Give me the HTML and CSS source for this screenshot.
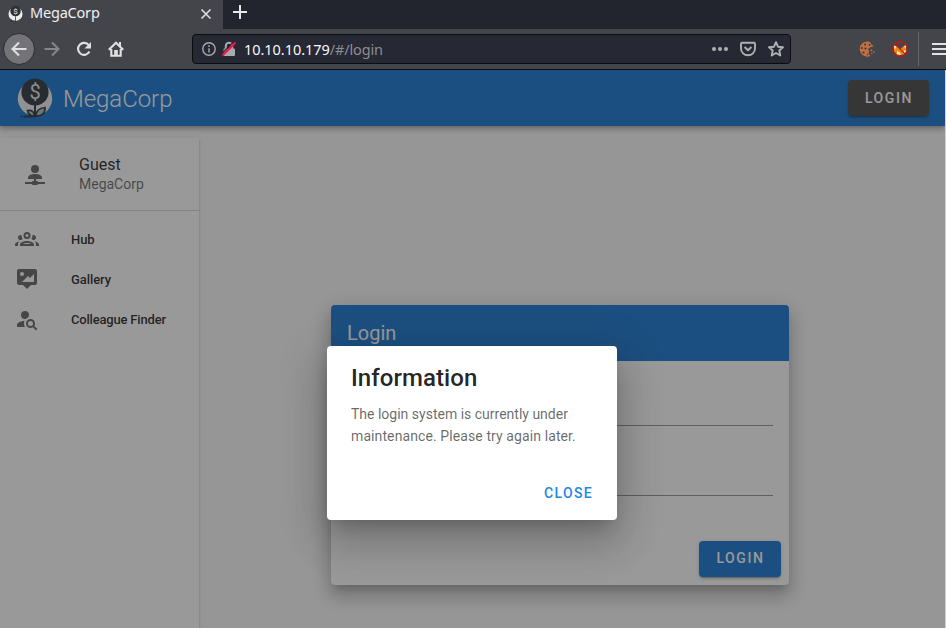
FILE: index.html
```
<!DOCTYPE html>
<html lang="en">
<head>
<meta charset="utf-8">
<title>MegaCorp</title>
<link rel="stylesheet" href="styles.css">
</head>
<body>
<div class="window">
  <div class="tabs">
    <div class="tab">
      <svg class="favicon" viewBox="4 2 38 42"><circle cx="23" cy="24" r="17.300" fill="#eee"/><circle cx="23" cy="17" r="13" fill="#2c3138"/><text x="23" y="24" class="coin">$</text><path d="M23 30v13M10 42h13" class="stem"/></svg>
      <span class="tab-title">MegaCorp</span>
      <svg class="tab-close" viewBox="0 0 12 12"><path d="m1.500 1.500 9 9m0-9-9 9"/></svg>
    </div>
    <svg class="new-tab" viewBox="0 0 14 14"><path d="M7 0v14M0 7h14"/></svg>
  </div>
  <div class="toolbar">
    <div class="back"><svg viewBox="0 0 16 16"><path d="M15.500 8H1.500M8 1.500 1.500 8 8 14.500"/></svg></div>
    <svg class="nav forward" viewBox="0 0 16 16"><path d="M.5 8h14M8 1.500 14.500 8 8 14.500"/></svg>
    <svg class="nav reload" viewBox="0 0 16 16"><path d="M13.400 10.600A6 6 0 1 1 12.800 4.200"/><path d="M15 1v6.500H8.500Z" class="solid"/></svg>
    <svg class="nav home" viewBox="0 0 16 16"><path d="M.8 8.800 8 1.800l7.200 7M3.300 8v6.700h9.400V8"/><path d="M6.200 9h3.600v6H6.200ZM11 1h2v4h-2Z" class="solid"/></svg>
    <div class="url">
      <svg class="info" viewBox="0 0 14 14"><circle cx="7" cy="7" r="6.200"/><path d="M7 6.200v4.300M7 3.300v1.600"/></svg>
      <svg class="lock" viewBox="0 0 14 16"><path d="M3.800 8V5a3.200 3.200 0 0 1 6.400 0v3" class="shackle"/><rect x="1.500" y="7.500" width="11.500" height="7.500" rx="1"/><path d="M-.8 13.200 12.200.2" class="gap"/><path d="M.5 14.500 13.500 1.500" class="slash"/></svg>
      <span class="address"><b>10.10.10.179</b>/#/login</span>
      <svg class="dots" viewBox="0 0 16 4"><circle cx="2" cy="2" r="2"/><circle cx="8" cy="2" r="2"/><circle cx="14" cy="2" r="2"/></svg>
      <svg class="line pocket" viewBox="0 0 16 16"><path d="M2 1.800h12q1 0 1 1V7.500a7 6.800 0 0 1-14 0V2.800q0-1 1-1ZM4.600 6 8 9.300 11.400 6"/></svg>
      <svg class="line star" viewBox="0 0 16 16"><path d="m8 1.200 2 4.500 5 .5-3.700 3.300 1 5L8 12l-4.300 2.500 1-5L1 6.200l5-.5Z"/></svg>
    </div>
    <svg class="ext cookie" viewBox="0 0 16 16"><path d="M10.500.8A7.600 7.600 0 1 0 11.500 15L9.500 12.500 10 10 9 8l2-1.500 4-1.500-2-1Z" fill="#bd7148"/><g fill="#5b3023"><circle cx="6" cy="3.500" r="1"/><circle cx="2.800" cy="7" r="1"/><circle cx="6.500" cy="7.500" r="1.100"/><circle cx="4.500" cy="11.500" r="1.100"/><circle cx="8.500" cy="13.500" r=".8"/><circle cx="10.500" cy="4" r="1"/></g><path d="M11.500 8.500h1.800v1.800h-1.800Zm2.700 1.500h1.300v1.500h-1.300ZM12 12h1.500v1H12Z" fill="#bd7148"/></svg>
    <svg class="ext fox" viewBox="0 0 16 16"><path d="m1.500 4 4 2 3 2 2-2 3.500-2 .5 6-3 3.500-6 1L2 10Z" fill="#e58a12"/><path d="m1.500 4 3 1.800L3 8.500ZM5 10l3 1.500 1 2.500-4-1Zm7-.5 2.500.5-3 3ZM14 3.500l-2 2 1.500 2Z" fill="#f0e6d5"/><circle cx="8" cy="8" r="7.300"/><path d="m2.800 2.800 10.400 10.400"/></svg>
    <div class="divider"></div>
    <svg class="menu" viewBox="0 0 14 12"><path d="M0 1h14M0 6h14M0 11h14"/></svg>
  </div>
  <div class="page">
    <header class="appbar">
      <svg class="logo" viewBox="0 0 46 48"><circle cx="23" cy="24.500" r="17.200" fill="#f0f0f0"/><circle cx="23" cy="18" r="13.600" fill="#2b3640"/><text x="23" y="25" class="coin">$</text><path d="M23 29v13.500M11.500 42.500H24" class="stem"/><path d="M22.500 42q-6 .5-7-5.500 6.500-1 7 5.500ZM24 42q0-7.500 9-8.500.5 8.500-9 8.500Z" class="leaf"/><circle cx="9.500" cy="42.500" r="1.100" fill="#2b3640"/></svg>
      <span class="brand">MegaCorp</span>
      <button class="btn dark">Login</button>
    </header>
    <div class="content">
      <nav class="drawer">
        <div class="user">
          <svg class="mdi" viewBox="0 0 24 24"><path d="M13 16v2h1a1 1 0 0 1 1 1h7v2h-7a1 1 0 0 1-1 1h-4a1 1 0 0 1-1-1H2v-2h7a1 1 0 0 1 1-1h1v-2H5v-1.500C5 12.570 8.130 11 12 11s7 1.570 7 3.500V16ZM12 2a4 4 0 1 1 0 8 4 4 0 0 1 0-8Z"/></svg>
          <div><div class="name">Guest</div><div class="org">MegaCorp</div></div>
        </div>
        <div class="links">
          <a class="link"><svg class="mdi" viewBox="0 0 24 24"><path d="M12,5A3.500,3.500 0 0,0 8.500,8.500A3.500,3.500 0 0,0 12,12A3.500,3.500 0 0,0 15.500,8.500A3.500,3.500 0 0,0 12,5M12,7A1.500,1.500 0 0,1 13.500,8.500A1.500,1.500 0 0,1 12,10A1.500,1.500 0 0,1 10.500,8.500A1.500,1.500 0 0,1 12,7M5.500,8A2.500,2.500 0 0,0 3,10.500C3,11.440 3.530,12.250 4.290,12.680C4.650,12.880 5.060,13 5.500,13C5.940,13 6.350,12.880 6.710,12.680C7.080,12.470 7.390,12.170 7.620,11.810C6.890,10.860 6.500,9.700 6.500,8.500V8.220C6.200,8.080 5.860,8 5.500,8M18.500,8C18.140,8 17.800,8.080 17.500,8.220V8.500C17.500,9.700 17.110,10.860 16.380,11.810C16.630,12.150 17.100,12.580 17.290,12.680C17.650,12.880 18.060,13 18.500,13C18.940,13 19.350,12.880 19.710,12.680C20.470,12.250 21,11.440 21,10.500A2.500,2.500 0 0,0 18.500,8M12,14C9.660,14 5,15.170 5,17.500V19H19V17.500C19,15.170 14.340,14 12,14M4.710,14.550C2.780,14.780 0,15.760 0,17.500V19H3V17.070C3,16.060 3.690,15.220 4.710,14.550M19.290,14.550C20.310,15.220 21,16.060 21,17.070V19H24V17.500C24,15.760 21.220,14.780 19.290,14.550M12,16C13.530,16 15.240,16.500 16.230,17H7.770C8.760,16.500 10.470,16 12,16Z"/></svg>Hub</a>
          <a class="link"><svg class="mdi" viewBox="0 0 24 24"><path d="M4,2H20A2,2 0 0,1 22,4V16A2,2 0 0,1 20,18H16L12,22L8,18H4A2,2 0 0,1 2,16V4A2,2 0 0,1 4,2M19,15V7L15,11L13,9L7,15H19M7,5A2,2 0 0,0 5,7A2,2 0 0,0 7,9A2,2 0 0,0 9,7A2,2 0 0,0 7,5Z"/></svg>Gallery</a>
          <a class="link finder"><svg class="mdi" viewBox="0 0 24 24"><path d="M15.500,12C18,12 20,14 20,16.500C20,17.380 19.750,18.210 19.310,18.900L22.390,22L21,23.390L17.880,20.320C17.190,20.750 16.370,21 15.500,21C13,21 11,19 11,16.500C11,14 13,12 15.500,12M15.500,14A2.500,2.500 0 0,0 13,16.500A2.500,2.500 0 0,0 15.500,19A2.500,2.500 0 0,0 18,16.500A2.500,2.500 0 0,0 15.500,14M10,4A4,4 0 0,1 14,8C14,8.910 13.690,9.750 13.180,10.430C12.320,10.750 11.550,11.260 10.910,11.900L10,12A4,4 0 0,1 6,8A4,4 0 0,1 10,4M2,20V18C2,15.880 5.310,14.140 9.500,14C9.180,14.780 9,15.620 9,16.500C9,17.790 9.380,19 10,20H2Z"/></svg>Colleague Finder</a>
        </div>
      </nav>
      <main class="main">
        <section class="card">
          <div class="card-head">Login</div>
          <div class="fields"><div class="field"></div><div class="field"></div></div>
          <div class="card-actions"><button class="btn primary">Login</button></div>
        </section>
      </main>
    </div>
    <div class="overlay"></div>
    <div class="dialog">
      <h2>Information</h2>
      <p><span class="tight">The login system is currently under</span> maintenance. Please try again later.</p>
      <button class="close">Close</button>
    </div>
  </div>
</div>
</body>
</html>
```
FILE: styles.css
```
* { box-sizing: border-box; }
body { margin: 0; font-family: Roboto, sans-serif; overflow: hidden; }
svg { display: block; flex: none; }
button { font-family: inherit; border: 0; }

.window { width: 946px; height: 628px; display: flex; flex-direction: column; background: #d0d0d0; }

/* Browser chrome */
.tabs { height: 29px; display: flex; background: #22242e; font-family: "Noto Sans", sans-serif; }
.tab { width: 223px; display: flex; align-items: center; padding: 0 11px 2px 7px; background: #43454b; }
.favicon { width: 17px; height: 17px; }
.coin { font: 400 20px Roboto, sans-serif; fill: #e9e9e9; text-anchor: middle; }
.tab-title { margin: -3px 0 0 6px; flex: 1; font-size: 14.5px; line-height: 20px; letter-spacing: -.2px; color: #f0f0f0; }
.tab-close { width: 12px; height: 12px; stroke: #dedede; stroke-width: 1.6; }
.new-tab { width: 14px; height: 14px; margin: 5px 0 0 10px; stroke: #e8e8e8; stroke-width: 2; }
.toolbar { height: 41px; display: flex; align-items: center; padding-left: 3px; background: #43454b; border-bottom: 1px solid #0c0c10; font-family: "Noto Sans", sans-serif; }
.toolbar svg { fill: none; }
.back { width: 32px; height: 32px; border-radius: 50%; background: #737378; border: 1px solid #2c2d32; display: flex; align-items: center; justify-content: center; }
.back svg, .nav { width: 16px; height: 16px; stroke: #e0e0e0; stroke-width: 2.1; }
.toolbar .solid { fill: #e0e0e0; stroke: none; }
.toolbar .home .solid { fill: #e0e0e0; }
.forward { margin-left: 9px; stroke: #85868a; }
.reload, .home { margin-left: 16px; }
.url { width: 599px; height: 30px; margin-left: 68px; padding: 0 6px 0 9px; display: flex; align-items: center; background: #262833; border: 1px solid #0c0c10; border-radius: 4px; }
.info { width: 14px; height: 14px; stroke: #aaabaf; stroke-width: 1.4; }
.lock { width: 14px; height: 16px; margin-left: 6px; }
.toolbar .lock rect { fill: #a9aaae; }
.lock .shackle { stroke: #a9aaae; stroke-width: 2; }
.lock .gap { stroke: #262833; stroke-width: 1.2; }
.lock .slash { stroke: #f5134b; stroke-width: 2; }
.address { flex: 1; margin-left: 8px; font-size: 14.5px; line-height: 20px; letter-spacing: -.15px; color: #8d8e94; }
.address b { font-weight: 400; color: #f9f9fa; letter-spacing: -.04px; }
.toolbar .dots { width: 16px; height: 4px; fill: #b1b1b4; }
.line { width: 16px; height: 16px; stroke: #b1b1b4; stroke-width: 1.9; stroke-linejoin: round; }
.pocket { margin-left: 12px; }
.star { margin-left: 12px; }
.ext { width: 16px; height: 16px; }
.cookie { margin-left: 68px; }
.fox { margin-left: 17px; stroke: none; }
.fox circle, .fox path:last-child { stroke: #d60f0f; stroke-width: 1.2; }
.divider { width: 1px; height: 34px; margin-left: 10px; background: #66676c; }
.menu { width: 14px; height: 12px; margin-left: 13px; stroke: #e3e3e3; stroke-width: 2; }

/* Application */
.page { position: relative; width: 945px; height: 558px; display: flex; flex-direction: column; background: #fafafa; overflow: hidden; }
.appbar { height: 56px; flex: none; z-index: 1; display: flex; align-items: center; padding: 0 16px 0 12px; background: #1976d2; box-shadow: 0 2px 4px -1px rgba(0,0,0,.2), 0 4px 5px rgba(0,0,0,.14), 0 1px 10px rgba(0,0,0,.12); }
.logo { width: 46px; height: 48px; }
.stem { fill: none; stroke: #2b3640; stroke-width: 2; }
.leaf { fill: #a5c6b8; stroke: #2b3640; stroke-width: 1.7; }
.brand { flex: 1; margin: 2px 0 0 5px; font-size: 24px; font-weight: 300; letter-spacing: -.05px; color: #fff; }
.btn { height: 36px; padding: 0 14px; border-radius: 4px; color: #fff; font-size: 14px; font-weight: 500; letter-spacing: 1.6px; text-indent: 1px; text-transform: uppercase; box-shadow: 0 3px 1px -2px rgba(0,0,0,.2), 0 2px 2px rgba(0,0,0,.14), 0 1px 5px rgba(0,0,0,.12); }
.dark { width: 81px; background: #484848; }
.primary { width: 82px; padding-bottom: 2px; background: #1976d2; }
.content { flex: 1; display: flex; }
.drawer { width: 199px; margin-top: 12px; background: #fff; box-shadow: 0 3px 1px -2px rgba(0,0,0,.2), 0 2px 2px rgba(0,0,0,.14), 0 1px 5px rgba(0,0,0,.12); }
.user { height: 73px; display: flex; align-items: center; gap: 32px; padding-left: 23px; border-bottom: 1px solid rgba(0,0,0,.16); }
.user .mdi { margin-top: 2px; }
.mdi { width: 24px; height: 24px; fill: rgba(0,0,0,.6); }
.name { font-size: 16px; line-height: 20px; color: rgba(0,0,0,.87); }
.org { font-size: 14px; line-height: 18px; color: rgba(0,0,0,.6); }
.links { padding-top: 8px; }
.link { height: 40px; display: flex; align-items: center; gap: 32px; padding-left: 15px; font-size: 13px; font-weight: 500; letter-spacing: -.08px; color: rgba(0,0,0,.87); }
.finder { letter-spacing: -.19px; }
.main { flex: 1; padding: 179px 0 0 132px; }
.card { width: 458px; height: 280px; display: flex; flex-direction: column; background: #fff; border-radius: 4px; box-shadow: 0 7px 8px -4px rgba(0,0,0,.2), 0 12px 17px 2px rgba(0,0,0,.14), 0 5px 22px 4px rgba(0,0,0,.12); }
.card-head { height: 56px; padding: 0 16px; line-height: 56px; font-size: 20px; color: #fff; background: #1976d2; border-radius: 4px 4px 0 0; }
.fields { padding: 0 16px; }
.field { height: 70px; border-bottom: 1px solid rgba(0,0,0,.42); }
.field:first-child { height: 65px; }
.card-actions { margin-top: auto; padding: 8px; display: flex; justify-content: flex-end; }
.overlay { position: absolute; inset: 0; z-index: 2; background: rgba(33,33,33,.46); }
.dialog { position: absolute; z-index: 3; left: 327px; top: 276px; width: 290px; height: 174px; padding: 16px 24px; display: flex; flex-direction: column; background: #fff; border-radius: 4px; box-shadow: 0 11px 15px -7px rgba(0,0,0,.2), 0 24px 38px 3px rgba(0,0,0,.14), 0 9px 46px 8px rgba(0,0,0,.12); }
.dialog h2 { margin: 0; font-size: 24px; line-height: 32px; font-weight: 500; letter-spacing: .06px; color: rgba(0,0,0,.87); }
.dialog p { margin: 9px 0 0; font-size: 14px; line-height: 22px; letter-spacing: .1px; color: rgba(0,0,0,.6); }
.tight { letter-spacing: 0; }
.close { align-self: flex-end; margin-top: auto; padding: 0; background: none; color: #1e88e5; font-size: 14px; line-height: 22px; font-weight: 500; letter-spacing: 1.35px; text-transform: uppercase; }
```
